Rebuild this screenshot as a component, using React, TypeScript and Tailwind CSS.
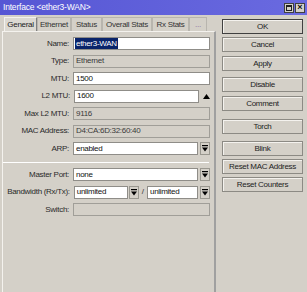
import React from "react";

const font = { fontFamily: '"Liberation Sans", Arial, sans-serif' };

const DropIcon: React.FC = () => (
  <svg width="6" height="7" viewBox="0 0 6 7">
    <rect x="0" y="0" width="6" height="1.2" fill="#000" />
    <path d="M0 2.4 H6 L3 6.6 Z" fill="#000" />
  </svg>
);

const DropButton: React.FC = () => (
  <div className="w-[10px] h-[13px] flex items-center justify-center bg-[#d4d0c8] border border-[#9a9890] shrink-0">
    <DropIcon />
  </div>
);

const Field: React.FC<{ label: string; children: React.ReactNode }> = ({ label, children }) => (
  <div className="flex items-center h-[13px]">
    <div className="w-[70px] text-right pr-[1px] text-[8px] tracking-[-0.3px] text-[#2a2a2a] leading-none whitespace-nowrap">
      {label}
    </div>
    <div className="ml-[3px] flex items-center flex-1">{children}</div>
  </div>
);

const TextBox: React.FC<{ value: string; w?: string; selected?: boolean }> = ({ value, w = "w-[137px]", selected }) => (
  <div
    className={`${w} h-[13px] bg-white border border-[#8f8d88] flex items-center px-[1px] text-[8px] tracking-[-0.3px] leading-none text-[#111] shrink-0 whitespace-nowrap`}
  >
    {selected ? (
      <span className="bg-[#0a246a] text-white px-[1px] h-[11px] flex items-center">{value}</span>
    ) : (
      <span className="pl-[1px]">{value}</span>
    )}
  </div>
);

const ReadBox: React.FC<{ value: string }> = ({ value }) => (
  <div className="w-[137px] h-[13px] bg-[#d4d0c8] border border-[#a09e98] flex items-center px-[2px] text-[8px] tracking-[-0.3px] leading-none text-[#3a3a3a] whitespace-nowrap">
    {value}
  </div>
);

const Btn: React.FC<{ label: string; className?: string; strong?: boolean }> = ({ label, className = "", strong }) => (
  <div
    className={`h-[15px] w-[81px] flex items-center justify-center text-[8px] tracking-[-0.3px] leading-none whitespace-nowrap text-[#222] bg-[#d4d0c8] border ${
      strong ? "border-[#404040]" : "border-[#8c8a84]"
    } shadow-[inset_1px_1px_0_#f4f2ee] ${className}`}
  >
    {label}
  </div>
);

const tabs = [
  { label: "General", w: "w-[33px]" },
  { label: "Ethernet", w: "w-[34px]" },
  { label: "Status", w: "w-[31px]" },
  { label: "Overall Stats", w: "w-[50px]" },
  { label: "Rx Stats", w: "w-[37px]" },
  { label: "...", w: "w-[18px]" },
];

export default function App() {
  return (
    <div className="w-[307px] h-[292px] bg-[#d4d0c8] flex flex-col overflow-hidden" style={font}>
      <div className="h-[15px] bg-gradient-to-r from-[#5656d4] to-[#6a6ae0] flex items-center justify-between pl-[3px] pr-[2px] shrink-0">
        <span className="text-white text-[8.5px] tracking-[-0.2px] leading-none">Interface &lt;ether3-WAN&gt;</span>
        <div className="flex gap-[1px]">
          <div className="w-[10px] h-[10px] bg-[#d4d0c8] border border-[#404040] flex items-center justify-center">
            <div className="w-[6px] h-[6px] border border-[#202020] border-t-2" />
          </div>
          <div className="w-[10px] h-[10px] bg-[#d4d0c8] border border-[#404040] flex items-center justify-center text-[9px] leading-none font-bold text-[#111]">
            ×
          </div>
        </div>
      </div>
      <div className="flex flex-1">
        <div className="w-[216px] flex flex-col pl-[2px]">
          <div className="flex mt-[2px] h-[14px] pl-[2px]">
            {tabs.map((t, i) => (
              <div
                key={t.label}
                className={`${t.w} h-[14px] flex items-center justify-center text-[8px] tracking-[-0.3px] leading-none whitespace-nowrap border border-b-0 ${
                  i === 0
                    ? "bg-[#dcd9d2] border-[#f4f2ee] border-r-[#808080] text-[#222]"
                    : i === 5
                    ? "bg-[#d4d0c8] border-[#b8b5ae] text-[#8a6aa0]"
                    : "bg-[#d4d0c8] border-[#b8b5ae] text-[#333]"
                }`}
              >
                {t.label}
              </div>
            ))}
          </div>
          <div className="flex-1 border-l border-t border-[#f4f2ee] border-r-2 border-r-[#a0a0a0] pt-[5px] pr-[4px] flex flex-col">
            <div className="flex flex-col gap-[4.5px]">
              <Field label="Name:">
                <TextBox value="ether3-WAN" selected />
              </Field>
              <Field label="Type:">
                <ReadBox value="Ethernet" />
              </Field>
              <Field label="MTU:">
                <TextBox value="1500" />
              </Field>
              <Field label="L2 MTU:">
                <TextBox value="1600" w="w-[125px]" />
                <svg width="7" height="5" viewBox="0 0 7 5" className="ml-[4px]">
                  <path d="M0 5 L3.5 0 L7 5 Z" fill="#000" />
                </svg>
              </Field>
              <Field label="Max L2 MTU:">
                <ReadBox value="9116" />
              </Field>
              <Field label="MAC Address:">
                <ReadBox value="D4:CA:6D:32:60:40" />
              </Field>
              <Field label="ARP:">
                <TextBox value="enabled" w="w-[125px]" />
                <div className="ml-[2px]">
                  <DropButton />
                </div>
              </Field>
            </div>
            <div className="h-[1px] bg-[#b8b5ae] border-b border-white mt-[7px] mb-[5px] mr-[1px]" />
            <div className="flex flex-col gap-[4.5px]">
              <Field label="Master Port:">
                <TextBox value="none" w="w-[125px]" />
                <div className="ml-[2px]">
                  <DropButton />
                </div>
              </Field>
              <Field label="Bandwidth (Rx/Tx):">
                <TextBox value="unlimited" w="w-[54px]" />
                <div className="ml-[1px]">
                  <DropButton />
                </div>
                <span className="mx-[3px] text-[8px] leading-none text-[#333]">/</span>
                <TextBox value="unlimited" w="w-[51px]" />
                <div className="ml-[2px]">
                  <DropButton />
                </div>
              </Field>
              <Field label="Switch:">
                <ReadBox value="" />
              </Field>
            </div>
          </div>
        </div>
        <div className="flex flex-col pl-[6px] pt-[4px]">
          <Btn label="OK" strong />
          <Btn label="Cancel" className="mt-[3px]" />
          <Btn label="Apply" className="mt-[4px]" />
          <Btn label="Disable" className="mt-[6px]" />
          <Btn label="Comment" className="mt-[4px]" />
          <Btn label="Torch" className="mt-[8px]" />
          <Btn label="Blink" className="mt-[7px]" />
          <Btn label="Reset MAC Address" className="mt-[3px]" />
          <Btn label="Reset Counters" className="mt-[3px]" />
        </div>
      </div>
    </div>
  );
}
